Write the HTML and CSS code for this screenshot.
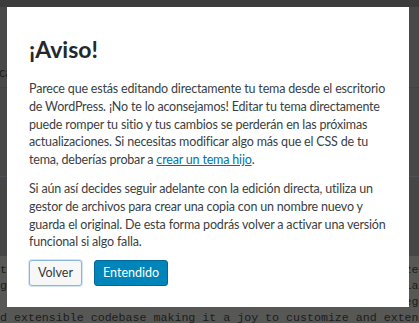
FILE: index.html
```html
<!DOCTYPE html>
<html lang="es">
<head>
  <meta charset="UTF-8">
  <meta name="viewport" content="width=device-width, initial-scale=1.0">
  <title>Editor de temas</title>
  <link rel="stylesheet" href="styles.css">
</head>
<body>
  <div class="page">
    <div class="adminbar"></div>
    <div class="header">
      <span class="header-text">ca</span>
    </div>
    <div class="notice"></div>
    <div class="files"></div>
    <div class="code">
<pre>theme features a flexible and modern layout set to customize
glamorous photography, business, magazine and personal media
 built with care, with a clean, fast and semantic HTML5, legible
d extensible codebase making it a joy to customize and extend the</pre>
    </div>
  </div>

  <div class="overlay">
    <div class="modal">
      <h2>¡Aviso!</h2>
      <p>Parece que estás editando directamente tu tema desde el escritorio<br>
        de WordPress. ¡No te lo aconsejamos! Editar tu tema directamente<br>
        puede romper tu sitio y tus cambios se perderán en las próximas<br>
        actualizaciones. Si necesitas modificar algo más que el CSS de tu<br>
        tema, deberías probar a <a href="#">crear un tema hijo</a>.</p>
      <p>Si aún así decides seguir adelante con la edición directa, utiliza un<br>
        gestor de archivos para crear una copia con un nombre nuevo y<br>
        guarda el original. De esta forma podrás volver a activar una versión<br>
        funcional si algo falla.</p>
      <div class="actions">
        <button class="button button-secondary">Volver</button>
        <button class="button button-primary">Entendido</button>
      </div>
    </div>
  </div>
</body>
</html>
```
FILE: styles.css
```css
body {
  margin: 0;
  background: #464646;
  font-family: Lato, "Open Sans", sans-serif;
  overflow: hidden;
}

/* the admin screen behind the dialog, already dimmed */
.page {
  height: 323px;
  display: flex;
  flex-direction: column;
}

.adminbar {
  height: 7px;
  background: #3c3c3c;
}

.header {
  height: 80px;
  background: #494949;
  border-bottom: 1px solid #414141;
}

.header-text {
  display: block;
  padding-top: 57px;
  margin-left: -1px;
  font-size: 13px;
  color: #1f1f1f;
}

.notice {
  height: 88px;
  background: #474747;
}

.files {
  height: 79px;
  background: #464646;
  border-top: 1px solid #4b5056;
}

.code {
  flex: 1;
  background: #575755;
  padding-top: 6px;
  overflow: hidden;
}

.code pre {
  margin: 0;
  font-family: "Liberation Mono", monospace;
  font-size: 11.64px;
  line-height: 16px;
  color: #1c1c1c;
  white-space: pre;
}

/* dialog */
.overlay {
  position: fixed;
  inset: 0;
}

.modal {
  position: absolute;
  left: 7px;
  top: 7px;
  width: 402px;
  height: 300px;
  box-sizing: border-box;
  padding: 0 22px;
  background: #fff;
  color: #3a3f44;
}

.modal h2 {
  margin: 27px 0 16px;
  font-size: 23px;
  line-height: 30px;
  font-weight: 700;
  color: #23282d;
}

.modal p {
  margin: 0;
  font-size: 12.5px;
  letter-spacing: -0.18px;
  line-height: 17.8px;
  white-space: nowrap;
}

.modal p + p {
  margin-top: 11px;
}

.modal a {
  color: #0073aa;
}

.actions {
  display: flex;
  gap: 12px;
  margin-top: 9px;
}

.button {
  height: 26px;
  padding: 0 8px;
  border-radius: 3px;
  font-family: inherit;
  font-size: 12.5px;
  line-height: 24px;
}

.button-secondary {
  background: #f7f7f7;
  border: 1px solid #8bb6da;
  box-shadow: 0 0 0 1px #d5e6f3;
  color: #32373c;
}

.button-primary {
  background: #0085ba;
  border: 1px solid #006799;
  color: #fff;
}
```
